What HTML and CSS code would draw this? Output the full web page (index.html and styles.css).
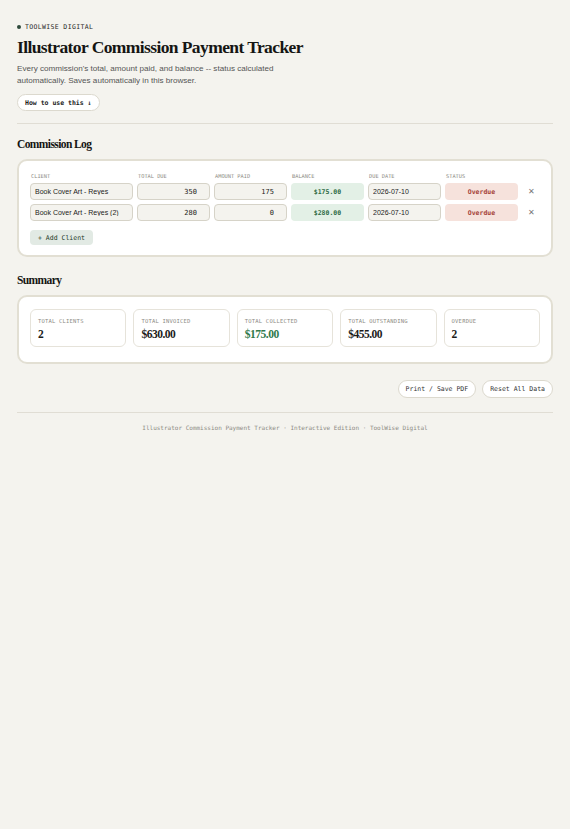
FILE: index.html
```html
<!DOCTYPE html>
<html lang="en">
<head>
  <meta charset="UTF-8" />
  <meta name="viewport" content="width=device-width, initial-scale=1" />
  <title>Illustrator Commission Payment Tracker</title>
  <link rel="stylesheet" href="styles.css">
</head>
<body>
  <header class="top">
    <div class="brand"><span class="dot"></span>TOOLWISE DIGITAL</div>
    <h1>Illustrator Commission Payment Tracker</h1>
    <p class="lead">Every commission's total, amount paid, and balance -- status calculated automatically. Saves automatically in this browser.</p>
    <button class="pill">How to use this ↓</button>
  </header>

  <hr class="rule">

  <h2>Commission Log</h2>
  <section class="card log">
    <div class="grid head">
      <span>CLIENT</span>
      <span>TOTAL DUE</span>
      <span>AMOUNT PAID</span>
      <span>BALANCE</span>
      <span>DUE DATE</span>
      <span>STATUS</span>
      <span></span>
    </div>
    <div class="grid row">
      <input class="field" type="text" value="Book Cover Art - Reyes">
      <input class="field num" type="text" value="350">
      <input class="field num" type="text" value="175">
      <div class="balance">$175.00</div>
      <input class="field" type="text" value="2026-07-10">
      <div class="status">Overdue</div>
      <button class="remove">✕</button>
    </div>
    <div class="grid row">
      <input class="field" type="text" value="Book Cover Art - Reyes (2)">
      <input class="field num" type="text" value="280">
      <input class="field num" type="text" value="0">
      <div class="balance">$280.00</div>
      <input class="field" type="text" value="2026-07-10">
      <div class="status">Overdue</div>
      <button class="remove">✕</button>
    </div>
    <button class="add">+ Add Client</button>
  </section>

  <h2>Summary</h2>
  <section class="card stats">
    <div class="stat"><div class="label">TOTAL CLIENTS</div><div class="value">2</div></div>
    <div class="stat"><div class="label">TOTAL INVOICED</div><div class="value">$630.00</div></div>
    <div class="stat"><div class="label">TOTAL COLLECTED</div><div class="value green">$175.00</div></div>
    <div class="stat"><div class="label">TOTAL OUTSTANDING</div><div class="value">$455.00</div></div>
    <div class="stat"><div class="label">OVERDUE</div><div class="value">2</div></div>
  </section>

  <div class="actions">
    <button class="pill light">Print / Save PDF</button>
    <button class="pill light">Reset All Data</button>
  </div>

  <hr class="rule bottom">
  <footer class="foot">Illustrator Commission Payment Tracker · Interactive Edition · ToolWise Digital</footer>
</body>
</html>
```

FILE: styles.css
```css
html, body {
  margin: 0;
  padding: 0;
}
body {
  background: #f4f3ee;
  color: #1c1c1a;
  font-family: "Liberation Sans", Arial, sans-serif;
  padding: 23px 17px 40px;
  box-sizing: border-box;
  width: 570px;
}
.top {
  display: flex;
  flex-direction: column;
  align-items: flex-start;
}
.brand {
  display: flex;
  align-items: center;
  gap: 4px;
  font-family: "DejaVu Sans Mono", monospace;
  font-size: 6.5px;
  letter-spacing: 0.35px;
  color: #2a2a28;
}
.dot {
  width: 4px;
  height: 4px;
  border-radius: 50%;
  background: #2d4a3a;
}
h1 {
  font-family: "Liberation Serif", "Times New Roman", serif;
  font-size: 17.5px;
  line-height: 20px;
  letter-spacing: -0.6px;
  font-weight: 700;
  margin: 6px 0 6px;
  color: #151513;
}
.lead {
  font-size: 8.1px;
  line-height: 11.5px;
  color: #555;
  margin: 0 0 8px;
  max-width: 275px;
}
.pill {
  font-family: "DejaVu Sans Mono", monospace;
  font-size: 6.5px;
  font-weight: 700;
  padding: 0 7px;
  height: 17px;
  border-radius: 10px;
  border: 1px solid #dcd9ce;
  background: #fff;
  color: #222;
}
.rule {
  border: none;
  border-top: 1px solid #e0ddd4;
  margin: 12px 0 0;
}
h2 {
  font-family: "Liberation Serif", "Times New Roman", serif;
  font-size: 11.5px;
  line-height: 14px;
  letter-spacing: -0.6px;
  font-weight: 700;
  margin: 13px 0 8px;
  color: #151513;
}
.card {
  background: #fff;
  border: 2px solid #e2dfd3;
  border-radius: 10px;
  margin-bottom: 16px;
}
.log {
  padding: 12px 11px 10px;
}
.grid {
  display: grid;
  grid-template-columns: 103px 73px 73px 73px 73px 73px 1fr;
  gap: 4px;
  align-items: center;
}
.head {
  font-family: "DejaVu Sans Mono", monospace;
  font-size: 5.3px;
  line-height: 6px;
  color: #8d8b84;
  margin-bottom: 4px;
}
.head span {
  padding-left: 1px;
}
.row {
  margin-bottom: 4px;
}
.field {
  box-sizing: border-box;
  height: 17px;
  width: 100%;
  border: 1px solid #d6d3c8;
  border-radius: 4px;
  background: #f4f3ee;
  font-family: "Liberation Sans", Arial, sans-serif;
  font-size: 7px;
  color: #1c1c1a;
  padding: 0 4px;
  margin: 0;
}
.field.num {
  font-family: "DejaVu Sans Mono", monospace;
  text-align: right;
  padding-right: 12px;
}
.balance, .status {
  height: 17px;
  border-radius: 4px;
  display: flex;
  align-items: center;
  justify-content: center;
  font-family: "DejaVu Sans Mono", monospace;
  font-size: 6.5px;
  font-weight: 700;
}
.balance {
  background: #e3f0e6;
  color: #2e6b44;
}
.status {
  background: #f6e2dc;
  color: #a54338;
}
.remove {
  background: none;
  border: none;
  color: #777;
  font-size: 8px;
  padding: 0;
  justify-self: center;
}
.add {
  display: block;
  margin-top: 9px;
  font-family: "DejaVu Sans Mono", monospace;
  font-size: 6.5px;
  height: 15px;
  padding: 0 8px;
  border: none;
  border-radius: 4px;
  background: #e2eae4;
  color: #1f3a2a;
}
.stats {
  display: grid;
  grid-template-columns: repeat(5, 1fr);
  gap: 7px;
  padding: 12px 11px 15px;
  margin-bottom: 16px;
}
.stat {
  border: 1px solid #e6e3da;
  border-radius: 6px;
  padding: 8px 7px 0;
  height: 38px;
  box-sizing: border-box;
}
.label {
  font-family: "DejaVu Sans Mono", monospace;
  font-size: 5.5px;
  line-height: 6.5px;
  color: #8d8b84;
  letter-spacing: 0.2px;
}
.value {
  font-family: "Liberation Serif", "Times New Roman", serif;
  font-size: 11.5px;
  line-height: 13px;
  letter-spacing: -0.5px;
  font-weight: 700;
  margin-top: 3px;
  color: #1c1c1a;
}
.value.green {
  color: #2f7a4b;
}
.actions {
  display: flex;
  justify-content: flex-end;
  gap: 6px;
}
.pill.light {
  font-weight: 400;
  color: #333;
  height: 18px;
}
.bottom {
  margin-top: 14px;
}
.foot {
  text-align: center;
  font-family: "DejaVu Sans Mono", monospace;
  font-size: 6px;
  line-height: 7px;
  color: #8d8b84;
  margin-top: 11px;
}
```
